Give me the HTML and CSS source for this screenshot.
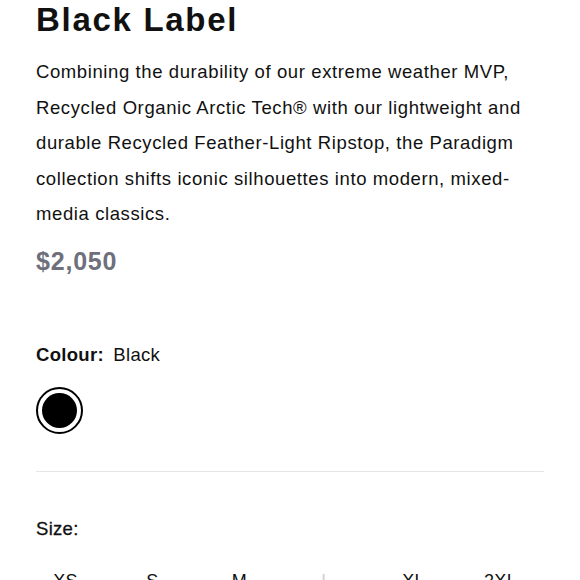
FILE: index.html
```html
<!DOCTYPE html>
<html>
<head>
<meta charset="utf-8">
<link rel="stylesheet" href="styles.css">
</head>
<body>
<main class="product">
  <h1 class="title">Black Label</h1>
  <p class="desc">Combining the durability of our extreme weather MVP, Recycled Organic Arctic Tech® with our lightweight and durable Recycled Feather-Light Ripstop, the Paradigm collection shifts iconic silhouettes into modern, mixed-media classics.</p>
  <div class="price">$2,050</div>
  <div class="colour-label"><span class="label-key">Colour:</span> <span class="label-val">Black</span></div>
  <div class="swatches">
    <button class="swatch selected"><span class="swatch-dot"></span></button>
  </div>
  <hr class="divider">
  <div class="size-label">Size:</div>
  <div class="sizes">
    <span class="size">XS</span>
    <span class="size">S</span>
    <span class="size">M</span>
    <span class="size unavailable">L</span>
    <span class="size">XL</span>
    <span class="size">2XL</span>
  </div>
</main>
</body>
</html>
```
FILE: styles.css
```css
html, body {
  margin: 0;
  padding: 0;
  background: #fff;
}
body {
  font-family: "Liberation Sans", Arial, sans-serif;
  color: #111;
}
.product {
  padding: 0 36px;
}
.title {
  margin: 0;
  font-size: 33px;
  font-weight: 700;
  line-height: 40px;
  letter-spacing: 1.7px;
}
.desc {
  margin: 14px 0 0;
  max-width: 492px;
  font-size: 18.5px;
  letter-spacing: 0.6px;
  line-height: 35.5px;
  color: #111;
}
.price {
  margin-top: 14px;
  font-size: 25px;
  font-weight: 700;
  letter-spacing: 0.8px;
  color: #6e707c;
  line-height: 30px;
}
.colour-label {
  margin-top: 67px;
  font-size: 18.5px;
  letter-spacing: 0.3px;
  line-height: 24px;
}
.label-key {
  font-weight: 700;
  margin-right: 4px;
}
.swatches {
  margin-top: 20px;
  display: flex;
}
.swatch {
  width: 47px;
  height: 47px;
  border-radius: 50%;
  border: 2px solid #000;
  background: #fff;
  padding: 0;
  display: flex;
  align-items: center;
  justify-content: center;
  box-sizing: border-box;
}
.swatch-dot {
  width: 35px;
  height: 35px;
  border-radius: 50%;
  background: #000;
}
.divider {
  margin: 37px 0 0;
  border: 0;
  border-top: 1px solid #e6e6e6;
}
.size-label {
  margin-top: 45px;
  font-size: 18.5px;
  letter-spacing: 0.3px;
  line-height: 24px;
  -webkit-text-stroke: 0.3px #111;
}
.sizes {
  margin: 28px 0 0 -14px;
  display: grid;
  grid-template-columns: repeat(6, 87px);
  font-size: 18px;
  letter-spacing: 0.3px;
  line-height: 24px;
}
.size {
  text-align: center;
}
.size.unavailable {
  color: #d0d0d0;
}
```
